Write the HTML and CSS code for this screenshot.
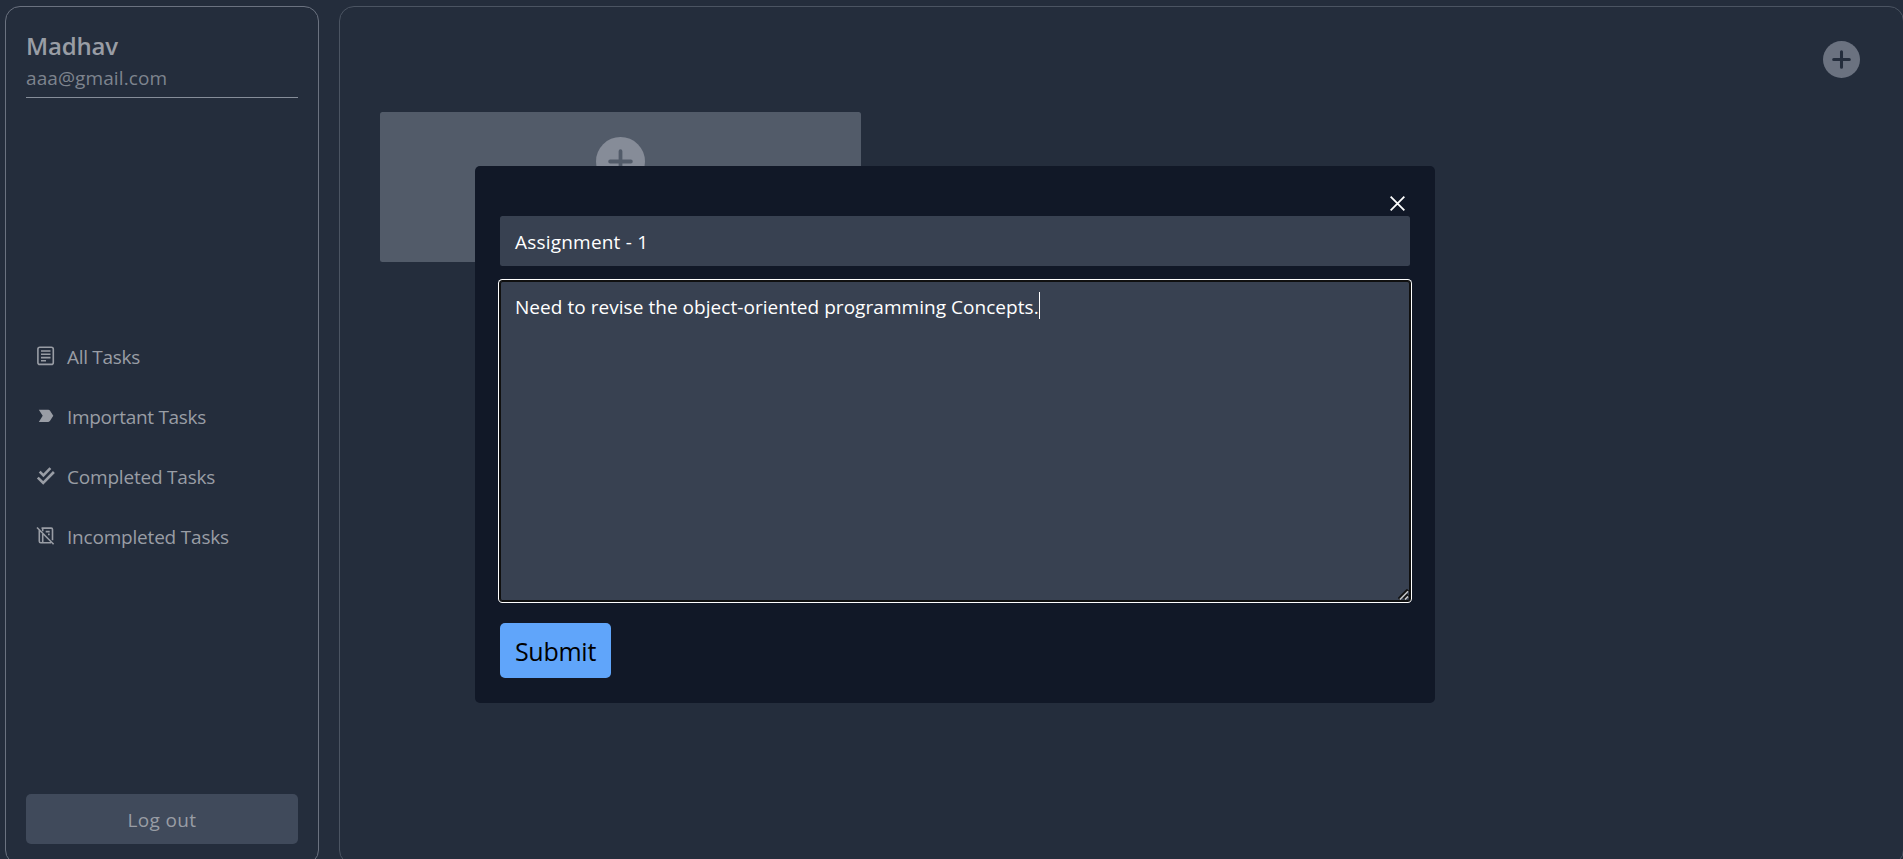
FILE: index.html
```html
<!DOCTYPE html>
<html lang="en">
<head>
<meta charset="utf-8">
<title>Tasks</title>
<link rel="stylesheet" href="styles.css">
</head>
<body>
<div class="app">
  <aside class="sidebar">
    <header class="profile">
      <h2 class="profile-name"><span>Madhav</span></h2>
      <p class="profile-email"><span>aaa@gmail.com</span></p>
    </header>
    <nav class="menu">
      <a class="menu-item"><svg class="menu-icon" viewBox="0 0 20 20" fill="none" stroke="currentColor"><rect x="1.9" y="1.2" width="15.4" height="17.2" rx="2" stroke-width="1.6"/><path d="M5 5h9.5M5 8.3h9.5M5 11.6h9.5M5 14.8h5" stroke-width="1.6"/></svg><span class="menu-label tight">All Tasks</span></a>
      <a class="menu-item"><svg class="menu-icon" viewBox="0 0 20 20" fill="currentColor"><path d="M2.8 3.7H12.3q1 0 1.6.8L17.3 9.8 13.9 15.1q-.6.8-1.6.8H2.8L6.7 9.8Z"/></svg><span class="menu-label tight">Important Tasks</span></a>
      <a class="menu-item"><svg class="menu-icon" viewBox="0 0 20 20" fill="none" stroke="currentColor" stroke-width="2.6"><path d="M3.7 5.7 7.4 9.5 14.4 2.2M1.8 11.6 7.2 17 17.9 6"/></svg><span class="menu-label">Completed Tasks</span></a>
      <a class="menu-item"><svg class="menu-icon" viewBox="0 0 20 20" fill="none" stroke="currentColor" stroke-width="1.6"><path d="M1 1.5 17.6 18.2M3.3 4v11.3q0 1.5 1.5 1.5H15M6.7 7.3v9.5M5.5 2.1h9.7q1.3 0 1.3 1.3v10.8M6.7 2.1v3.2M9.7 5.6h4M12 8.4h1.7"/></svg><span class="menu-label">Incompleted Tasks</span></a>
    </nav>
    <button class="logout"><span>Log out</span></button>
  </aside>
  <main class="board">
    <div class="toolbar">
      <svg class="add-icon" viewBox="48 48 416 416"><circle cx="256" cy="256" r="208" fill="currentColor"/><path class="add-cross" d="M256 168v176M168 256h176"/></svg>
    </div>
    <div class="cards">
      <section class="card">
        <svg class="card-icon" viewBox="48 48 416 416"><circle cx="256" cy="256" r="208" fill="currentColor"/><path class="card-cross" d="M256 168v176M168 256h176"/></svg>
      </section>
    </div>
  </main>
</div>
<div class="overlay">
  <form class="modal">
    <div class="modal-head">
      <svg class="close" viewBox="0 0 16 16" stroke="currentColor" stroke-width="1.9" fill="none"><path d="M.7.7 15.3 15.3M15.3.7.7 15.3"/></svg>
    </div>
    <div class="field title-field"><span>Assignment - 1</span></div>
    <div class="field desc-field"><span class="desc">Need to revise the object-oriented programming Concepts.</span><i class="caret"></i>
      <svg class="grip" viewBox="0 0 12 12" fill="none"><path d="M1 11 11 1M6.5 11 11 6.5" stroke="#111" stroke-width="3.6"/><path d="M2 11.5 11 2.5M7.5 11.5 11 8" stroke="#c4c6c9" stroke-width="1.7"/></svg>
    </div>
    <button type="button" class="submit"><span>Submit</span></button>
  </form>
</div>
</body>
</html>
```
FILE: styles.css
```css
* { box-sizing: border-box; margin: 0; padding: 0; }
body {
  height: 859px;
  overflow: hidden;
  background: #242d3c;
  color: #999da5;
  font-family: "Open Sans", "Noto Sans", sans-serif;
  font-size: 19px;
}
span { white-space: nowrap; }
.app {
  display: flex;
  gap: 20px;
  padding: 6px 0 0 5px;
  width: 1904px;
}
.sidebar {
  display: flex;
  flex-direction: column;
  justify-content: space-between;
  width: 314px;
  height: 859px;
  padding: 20px;
  border: 1px solid #6b7280;
  border-radius: 15px;
}
.profile { height: 71px; border-bottom: 1px solid #868d99; }
.profile-name { font-size: 24px; font-weight: 600; line-height: 38px; letter-spacing: -.2px; }
.profile-email { color: #7e848e; line-height: 27px; letter-spacing: .1px; }
.menu { display: flex; flex-direction: column; gap: 10px; }
.menu-item {
  display: flex;
  align-items: center;
  gap: 11px;
  height: 50px;
  padding-left: 10px;
}
.menu-icon { width: 20px; height: 20px; }
.menu-label { padding-top: 2px; letter-spacing: -.2px; }
.tight { letter-spacing: -.3px; }
.logout {
  height: 50px;
  padding-top: 2px;
  border: 0;
  border-radius: 5px;
  background: #404a5b;
  color: #999da5;
  font: inherit;
  letter-spacing: .35px;
}
.board {
  width: 1565px;
  height: 859px;
  padding: 34px 43px 0 40px;
  border: 1px solid #4b5462;
  border-radius: 15px;
}
.toolbar { display: flex; justify-content: flex-end; height: 71px; }
.add-icon { width: 37px; height: 37px; color: #6b7280; }
.add-cross { stroke: #242d3c; stroke-width: 34; stroke-linecap: round; }
.card {
  display: flex;
  justify-content: center;
  width: 481px;
  height: 150px;
  padding-top: 25px;
  border-radius: 2.5px;
  background: #525b69;
}
.card-icon { width: 49px; height: 49px; color: #868c98; }
.card-cross { stroke: #525b69; stroke-width: 32; stroke-linecap: round; }
.overlay {
  position: absolute;
  inset: 0;
  display: flex;
  justify-content: center;
  align-items: flex-start;
  padding: 166px 0 0 7px;
}
.modal {
  width: 960px;
  height: 537px;
  padding: 25px;
  border-radius: 5px;
  background: #111827;
  color: #fff;
}
.modal-head {
  display: flex;
  justify-content: flex-end;
  align-items: flex-end;
  height: 25px;
  padding: 0 5px 5px 0;
}
.close { width: 15px; height: 15px; }
.field { border-radius: 2.5px; background: #384151; padding: 0 15px; }
.title-field { height: 50px; line-height: 53px; letter-spacing: .2px; }
.desc-field {
  position: relative;
  display: flex;
  height: 320px;
  margin-top: 15px;
  padding-top: 11px;
  line-height: 31px;
  letter-spacing: .045px;
  box-shadow: inset 0 0 0 1px #101010, 0 0 0 1px #101010, 0 0 0 2px #fff;
}
.caret { width: 1px; height: 27px; background: #fff; }
.grip { position: absolute; right: 1px; bottom: 1px; width: 11px; height: 11px; }
.submit {
  width: 111px;
  height: 55px;
  margin-top: 22px;
  padding-top: 2px;
  border: 0;
  border-radius: 5px;
  background: #60a5fa;
  color: #000;
  font: 500 25px/53px "Open Sans", "Noto Sans", sans-serif;
  letter-spacing: -.25px;
}
```
